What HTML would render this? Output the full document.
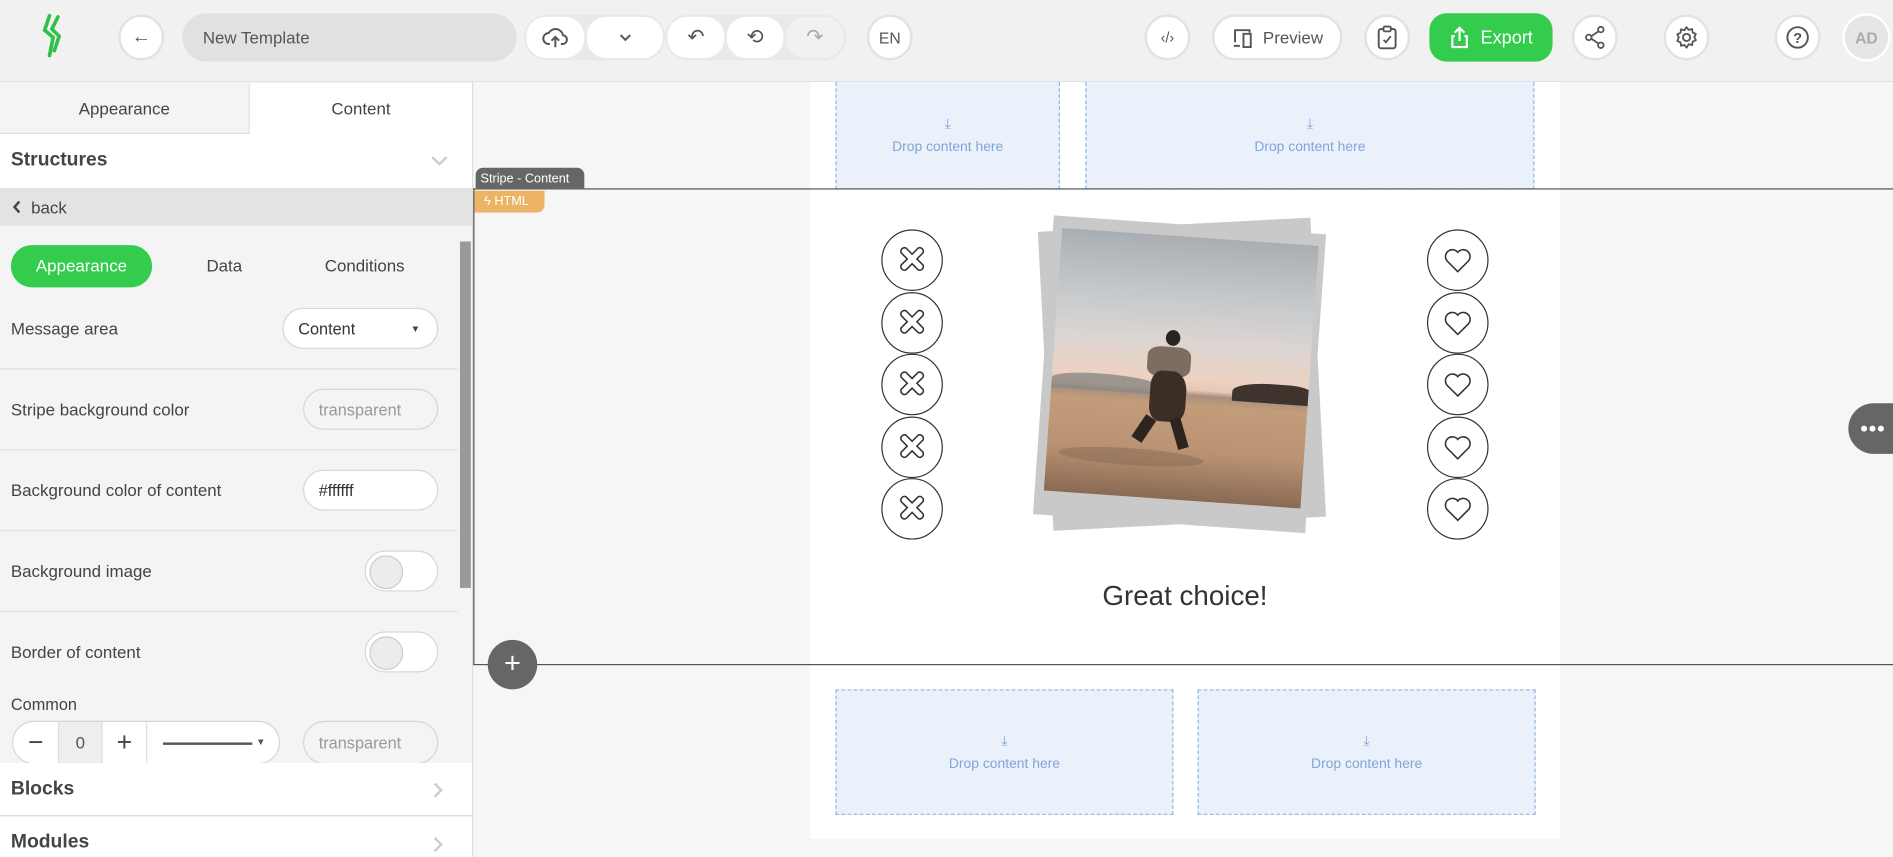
<!DOCTYPE html>
<html><head><meta charset="utf-8"><style>
*{box-sizing:border-box;margin:0;padding:0}
html,body{width:1893px;height:857px;overflow:hidden;background:#f6f6f6;font-family:"Liberation Sans",sans-serif}
#w{width:1568px;height:710px;transform:scale(1.20727);transform-origin:0 0;position:relative;background:#f6f6f6}
.a{position:absolute}
.btn{position:absolute;background:#fff;border:2px solid #e2e2e2;border-radius:20px;display:flex;align-items:center;justify-content:center;color:#555;font-size:14px}
.seg{position:absolute;top:2px;height:34px;background:#fff;border-radius:16px;display:flex;align-items:center;justify-content:center;color:#555}
.row{position:absolute;left:0;width:379px;border-bottom:1px solid #e0e0e0}
.lbl{position:absolute;left:9px;font-size:14px;color:#444}
.pill{position:absolute;border:1px solid #d6d6d6;border-radius:18px;background:#fff;font-size:13.5px;color:#333;padding-left:12px;display:flex;align-items:center}
.tog{position:absolute;left:302px;width:61px;height:34px;border:1px solid #d6d6d6;border-radius:17px;background:#fff}
.tog:after{content:"";position:absolute;left:3px;top:3px;width:26px;height:26px;border-radius:50%;background:#ececec;border:1px solid #ccc}
.drop{position:absolute;background:#eaf1fb;border:1px dashed #8fb6e3;color:#7ea6d6;font-size:11.5px;display:flex;flex-direction:column;align-items:center;justify-content:center;gap:6px}
.circ{position:absolute;width:51px;height:51px;border:1.5px solid #333;border-radius:50%;background:#fff}
</style></head><body><div id="w">
<div class="a" style="left:0;top:0;width:1568px;height:68px;background:#f1f1f1;border-bottom:1px solid #e2e2e2"></div>
<svg class="a" style="left:32px;top:10px" width="24" height="40" viewBox="0 0 24 40"><path d="M9 3 L5 15 L12 21 L9 36" stroke="#2fc24a" stroke-width="3" fill="none" stroke-linecap="round"/><path d="M16 4 L11 14 L17 20 L13 32" stroke="#2fc24a" stroke-width="3" fill="none" stroke-linecap="round"/></svg>
<div class="btn" style="left:98px;top:12px;width:38px;height:38px;font-size:16px">←</div>
<div class="a" style="left:151px;top:11px;width:277px;height:40px;background:#e1e1e1;border-radius:20px;font-size:14px;color:#555;padding:12px 17px">New Template</div>
<div class="btn" style="left:434px;top:12px;width:117px;height:38px;background:#e9e9e9;border:none">
<div class="seg" style="left:2px;width:48px"><svg width="22" height="20" viewBox="0 0 24 22"><path d="M7 17H6a5 5 0 0 1 0-10 7 7 0 0 1 13 2 4 4 0 0 1-1 8h-1M12 20v-9M8.5 14l3.5-3.5 3.5 3.5" stroke="#555" stroke-width="1.8" fill="none"/></svg></div>
<div class="seg" style="left:52px;width:63px"><svg width="12" height="8" viewBox="0 0 12 8"><path d="M2 2l4 4 4-4" stroke="#555" stroke-width="1.6" fill="none"/></svg></div></div>
<div class="btn" style="left:551px;top:12px;width:150px;height:38px;background:#e9e9e9;border:none">
<div class="seg" style="left:2px;width:47px;font-size:17px">↶</div><div class="seg" style="left:51px;width:47px;font-size:17px">⟲</div><div class="seg" style="left:100px;width:48px;font-size:17px;color:#aaa;background:#f1f1f1">↷</div></div>
<div class="btn" style="left:718px;top:12px;width:38px;height:38px;font-size:13px">EN</div>
<div class="btn" style="left:948px;top:12px;width:38px;height:38px;font-size:12px">‹/›</div>
<div class="btn" style="left:1004px;top:12px;width:108px;height:38px;gap:6px"><svg width="20" height="20" viewBox="0 0 20 20"><path d="M3 14V4h12v2M2 17h5M10 7h6v11h-6z" stroke="#555" stroke-width="1.6" fill="none"/></svg>Preview</div>
<div class="btn" style="left:1130px;top:12px;width:38px;height:38px"><svg width="18" height="22" viewBox="0 0 18 22"><rect x="2" y="4" width="14" height="16" rx="2" stroke="#555" stroke-width="1.6" fill="none"/><rect x="6" y="2" width="6" height="4" rx="1" stroke="#555" stroke-width="1.5" fill="#fff"/><path d="M6 13l2 2 4-5" stroke="#555" stroke-width="1.5" fill="none"/></svg></div>
<div class="a" style="left:1184px;top:11px;width:102px;height:40px;background:#33cc4c;border-radius:14px;color:#fff;font-size:15px;display:flex;align-items:center;justify-content:center;gap:8px"><svg width="18" height="20" viewBox="0 0 18 20"><path d="M9 13V2M5 6l4-4 4 4M5 9H3v9h12V9h-2" stroke="#fff" stroke-width="1.8" fill="none"/></svg>Export</div>
<div class="btn" style="left:1302px;top:12px;width:38px;height:38px"><svg width="18" height="20" viewBox="0 0 18 20"><circle cx="14" cy="3.5" r="2.3" stroke="#555" stroke-width="1.5" fill="none"/><circle cx="4" cy="10" r="2.3" stroke="#555" stroke-width="1.5" fill="none"/><circle cx="14" cy="16.5" r="2.3" stroke="#555" stroke-width="1.5" fill="none"/><path d="M6 9l6-4M6 11l6 4" stroke="#555" stroke-width="1.5"/></svg></div>
<div class="btn" style="left:1378px;top:12px;width:38px;height:38px"><svg width="20" height="20" viewBox="0 0 20 20"><circle cx="10" cy="10" r="3" stroke="#555" stroke-width="1.6" fill="none"/><path d="M10 1.5l1.8 2.3 2.8-.8.4 2.9 2.7 1.2-1.3 2.6 1.3 2.6-2.7 1.2-.4 2.9-2.8-.8L10 18.5l-1.8-2.3-2.8.8-.4-2.9-2.7-1.2L3.6 10 2.3 7.4 5 6.2l.4-2.9 2.8.8z" stroke="#555" stroke-width="1.5" fill="none" stroke-linejoin="round"/></svg></div>
<div class="btn" style="left:1470px;top:12px;width:38px;height:38px"><svg width="20" height="20" viewBox="0 0 20 20"><circle cx="10" cy="10" r="8.5" stroke="#555" stroke-width="1.6" fill="none"/><text x="10" y="14.5" text-anchor="middle" font-size="12" font-weight="bold" fill="#555" font-family="Liberation Sans">?</text></svg></div>
<div class="a" style="left:1526px;top:11px;width:40px;height:40px;border-radius:50%;background:#e6e6e6;border:2px solid #fff;color:#aaa;font-size:13px;font-weight:bold;display:flex;align-items:center;justify-content:center">AD</div>

<div class="a" style="left:0;top:68px;width:392px;height:642px;background:#f4f4f4;border-right:1px solid #ddd"></div>
<div class="a" style="left:0;top:69px;width:207px;height:42px;background:#f4f4f4;border-right:1px solid #e0e0e0;border-bottom:1px solid #e0e0e0;font-size:14px;color:#444;text-align:center;line-height:42px">Appearance</div>
<div class="a" style="left:207px;top:69px;width:184px;height:42px;background:#fff;font-size:14px;color:#444;text-align:center;line-height:42px">Content</div>
<div class="a" style="left:0;top:111px;width:391px;height:46px;background:#fff;border-bottom:1px solid #ddd;font-size:16px;font-weight:bold;color:#444;padding:13px 9px">Structures<svg style="position:absolute;right:20px;top:18px" width="14" height="9" viewBox="0 0 14 9"><path d="M1 1l6 6 6-6" stroke="#ccc" stroke-width="2" fill="none"/></svg></div>
<div class="a" style="left:0;top:157px;width:391px;height:30px;background:#e3e3e3;font-size:14px;color:#444;padding:7px 10px"><svg width="8" height="11" viewBox="0 0 8 11"><path d="M6 1L2 5.5 6 10" stroke="#444" stroke-width="2" fill="none"/></svg>&nbsp; back</div>
<div class="a" style="left:381px;top:200px;width:9px;height:287px;background:#999"></div>
<div class="a" style="left:9px;top:203px;width:117px;height:35px;background:#33cc4c;border-radius:18px;color:#fff;font-size:14px;text-align:center;line-height:35px">Appearance</div>
<div class="a" style="left:171px;top:212px;font-size:14px;color:#444">Data</div>
<div class="a" style="left:269px;top:212px;font-size:14px;color:#444">Conditions</div>
<div class="lbl" style="top:264px">Message area</div>
<div class="pill" style="left:234px;top:255px;width:129px;height:34px">Content<span style="position:absolute;right:14px;font-size:8px;color:#444">▼</span></div>
<div class="row" style="top:305px"></div>
<div class="lbl" style="top:331px">Stripe background color</div>
<div class="pill" style="left:251px;top:322px;width:112px;height:34px;color:#999;background:#f4f4f4">transparent</div>
<div class="row" style="top:372px"></div>
<div class="lbl" style="top:398px">Background color of content</div>
<div class="pill" style="left:251px;top:389px;width:112px;height:34px">#ffffff</div>
<div class="row" style="top:439px"></div>
<div class="lbl" style="top:465px">Background image</div>
<div class="tog" style="top:456px"></div>
<div class="row" style="top:506px"></div>
<div class="lbl" style="top:532px">Border of content</div>
<div class="tog" style="top:523px"></div>
<div class="lbl" style="top:576px;font-size:13.5px">Common</div>
<div class="a" style="left:10px;top:597px;width:222px;height:36px;border:1px solid #d6d6d6;border-radius:18px;background:#fff;overflow:hidden">
<div class="a" style="left:0;top:0;width:37px;height:36px;text-align:center;font-size:22px;line-height:34px;color:#444">−</div>
<div class="a" style="left:37px;top:0;width:37px;height:36px;background:#eee;border-left:1px solid #ddd;border-right:1px solid #ddd;text-align:center;line-height:34px;font-size:14px;color:#555">0</div>
<div class="a" style="left:74px;top:0;width:37px;height:36px;border-right:1px solid #ddd;text-align:center;font-size:22px;line-height:34px;color:#444">+</div>
<div class="a" style="left:124px;top:17px;width:74px;height:1.5px;background:#555"></div>
<div class="a" style="left:201px;top:12px;font-size:8px;color:#555">▼</div></div>
<div class="pill" style="left:251px;top:597px;width:112px;height:36px;color:#999;background:#f4f4f4">transparent</div>
<div class="a" style="left:0;top:632px;width:391px;height:44px;background:#fff;border-bottom:1px solid #ddd;font-size:16px;font-weight:bold;color:#444;padding:13px 9px">Blocks<svg style="position:absolute;right:24px;top:16px" width="8" height="13" viewBox="0 0 8 13"><path d="M1 1l5.5 5.5L1 12" stroke="#ccc" stroke-width="2" fill="none"/></svg></div>
<div class="a" style="left:0;top:677px;width:391px;height:33px;background:#fff;font-size:16px;font-weight:bold;color:#444;padding:12px 9px">Modules<svg style="position:absolute;right:24px;top:16px" width="8" height="13" viewBox="0 0 8 13"><path d="M1 1l5.5 5.5L1 12" stroke="#ccc" stroke-width="2" fill="none"/></svg></div>

<div class="a" style="left:671px;top:68px;width:621px;height:627px;background:#fff"></div>
<div class="drop" style="left:692px;top:68px;width:186px;height:89px;border-top:none"><span>⤓</span>Drop content here</div>
<div class="drop" style="left:899px;top:68px;width:372px;height:89px;border-top:none"><span>⤓</span>Drop content here</div>
<div class="drop" style="left:692px;top:571px;width:280px;height:104px"><span>⤓</span>Drop content here</div>
<div class="drop" style="left:992px;top:571px;width:280px;height:104px"><span>⤓</span>Drop content here</div>
<div class="a" style="left:392px;top:156px;width:1180px;height:395px;border:1.5px solid #555;border-right:none"></div>
<div class="a" style="left:394px;top:139px;width:90px;height:18px;background:#666;border-radius:6px 6px 0 0;color:#fff;font-size:10.5px;padding:3px 4px">Stripe - Content</div>
<div class="a" style="left:393px;top:158px;width:58px;height:18px;background:#ecb464;border-radius:0 0 6px 0;color:#fff;font-size:10.5px;padding:3px 8px">ϟ HTML</div>

<div class="circ" style="left:730px;top:190px"></div><div class="circ" style="left:730px;top:242px"></div><div class="circ" style="left:730px;top:293px"></div><div class="circ" style="left:730px;top:345px"></div><div class="circ" style="left:730px;top:396px"></div>
<svg class="a" style="left:730px;top:190px" width="51" height="260" viewBox="0 0 51 260">
<defs><path id="x" d="M-9-6a3 3 0 0 1 4-4l5 5 5-5a3 3 0 0 1 4 4l-5 5 5 5a3 3 0 0 1-4 4l-5-5-5 5a3 3 0 0 1-4-4l5-5z" fill="none" stroke="#333" stroke-width="1.3"/></defs>
<use href="#x" x="25.5" y="25.5"/><use href="#x" x="25.5" y="77.5"/><use href="#x" x="25.5" y="128.5"/><use href="#x" x="25.5" y="180.5"/><use href="#x" x="25.5" y="231.5"/></svg>
<div class="circ" style="left:1182px;top:190px"></div><div class="circ" style="left:1182px;top:242px"></div><div class="circ" style="left:1182px;top:293px"></div><div class="circ" style="left:1182px;top:345px"></div><div class="circ" style="left:1182px;top:396px"></div>
<svg class="a" style="left:1182px;top:190px" width="51" height="260" viewBox="0 0 51 260">
<defs><path id="h" d="M0 9L-9 0a5 5 0 0 1 9-7a5 5 0 0 1 9 7z" fill="none" stroke="#333" stroke-width="1.3"/></defs>
<use href="#h" x="25.5" y="26"/><use href="#h" x="25.5" y="78"/><use href="#h" x="25.5" y="129"/><use href="#h" x="25.5" y="181"/><use href="#h" x="25.5" y="232"/></svg>

<div class="a" style="left:866px;top:186px;width:226px;height:248px;background:#c9c9c9;transform:rotate(-3deg)"></div>
<div class="a" style="left:864px;top:186px;width:226px;height:248px;background:#c9c9c9;transform:rotate(4deg)"></div>
<div class="a" style="left:872px;top:196px;width:213px;height:218px;transform:rotate(4deg);background:linear-gradient(180deg,#a9aeb2 0%,#c4c8cb 22%,#dcd5d2 40%,#ecd2c2 54%,#e7c7b5 58%,#a88f7d 60%,#c39d7a 64%,#b89272 82%,#8a6a54 100%);overflow:hidden">
<div class="a" style="left:0;top:118px;width:90px;height:14px;background:#8b8785;border-radius:60% 80% 0 0;opacity:.8"></div>
<div class="a" style="left:150px;top:117px;width:65px;height:16px;background:#3f342d;border-radius:50% 30% 0 0"></div>
<div class="a" style="left:92px;top:78px;width:12px;height:13px;background:#2a2420;border-radius:50%"></div>
<div class="a" style="left:78px;top:92px;width:36px;height:25px;background:#7d6c60;border-radius:30%"></div>
<div class="a" style="left:82px;top:112px;width:30px;height:42px;background:#3a2e27;border-radius:30% 40% 30% 30%"></div>
<div class="a" style="left:74px;top:150px;width:10px;height:22px;background:#2d2420;transform:rotate(30deg)"></div>
<div class="a" style="left:104px;top:150px;width:9px;height:26px;background:#2d2420;transform:rotate(-20deg)"></div>
<div class="a" style="left:10px;top:178px;width:120px;height:14px;background:#8f7058;border-radius:50%;opacity:.6"></div>
</div>
<div class="a" style="left:860px;top:480px;width:243px;text-align:center;font-size:23px;color:#333">Great choice!</div>

<div class="a" style="left:404px;top:530px;width:41px;height:41px;border-radius:50%;background:#666;color:#fff;font-size:24px;text-align:center;line-height:40px">+</div>
<div class="a" style="left:1531px;top:334px;width:37px;height:42px;border-radius:21px 0 0 21px;background:#666"><svg class="a" style="left:10px;top:18px" width="20" height="6" viewBox="0 0 20 6"><circle cx="3" cy="3" r="2.5" fill="#fff"/><circle cx="10" cy="3" r="2.5" fill="#fff"/><circle cx="17" cy="3" r="2.5" fill="#fff"/></svg></div>
</div></body></html>
